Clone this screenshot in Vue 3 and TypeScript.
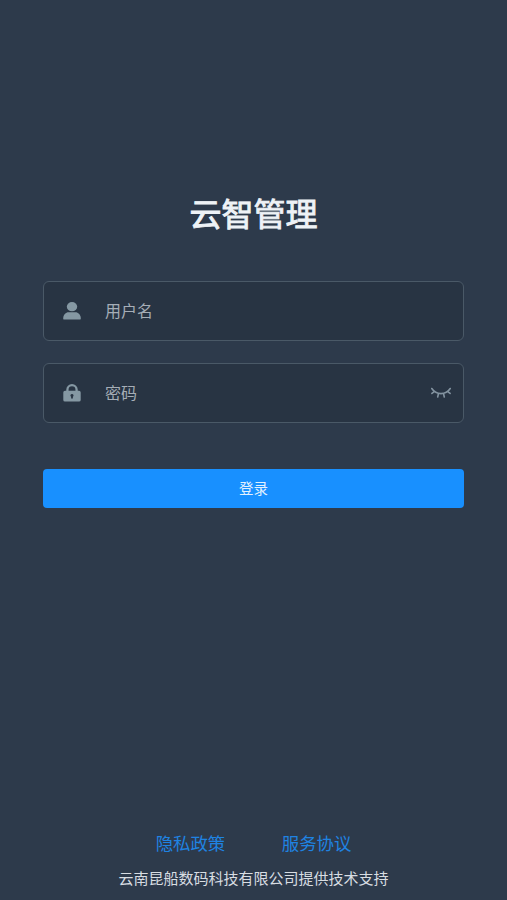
<script setup lang="ts">
import { ref } from 'vue'

const username = ref('')
const password = ref('')
</script>

<template>
  <main class="page">
    <h1 class="title">云智管理</h1>
    <form class="form" @submit.prevent>
      <label class="field">
        <svg class="icon" viewBox="0 0 18 18" fill="currentColor">
          <ellipse cx="9" cy="4.7" rx="5.2" ry="4.6" />
          <path d="M.2 16.4C.2 12.6 2.800 10.200 5.600 10.200h6.800c2.800 0 5.400 2.400 5.400 6.200 0 .8-.5 1.200-1.200 1.200H1.400C.7 17.600.2 17.200.2 16.400Z" />
        </svg>
        <input v-model="username" class="input" type="text" placeholder="用户名" />
      </label>
      <label class="field">
        <svg class="icon" viewBox="0 0 18 18">
          <path d="M4.400 8V5.800a4.600 4.600 0 0 1 9.200 0V8" fill="none" stroke="currentColor" stroke-width="2.300" />
          <path fill="currentColor" fill-rule="evenodd" d="M2 6.800h14a1.700 1.700 0 0 1 1.700 1.700v7.400a1.700 1.700 0 0 1-1.700 1.700H2a1.700 1.700 0 0 1-1.700-1.700V8.500A1.700 1.700 0 0 1 2 6.800ZM9 9.900a1.600 1.600 0 0 0-.9 2.900V14.600h1.800V12.800A1.600 1.600 0 0 0 9 9.900Z" />
        </svg>
        <input v-model="password" class="input" type="password" placeholder="密码" />
        <svg class="eye" viewBox="0 0 20 12" fill="none" stroke="currentColor" stroke-width="1.600" stroke-linecap="round">
          <path d="M.8 1.500C5.200 8.300 14.800 8.300 19.200 1.500M3.600 4.300.9 6.400M7.500 6.500 6.700 10M12.500 6.500l.8 3.500M16.400 4.300l2.700 2.100" />
        </svg>
      </label>
      <button class="submit" type="submit">登录</button>
    </form>
    <footer class="footer">
      <nav class="links">
        <a class="link">隐私政策</a>
        <a class="link">服务协议</a>
      </nav>
      <p class="support">云南昆船数码科技有限公司提供技术支持</p>
    </footer>
  </main>
</template>

<style>
body {
  background: #2d3a4b;
}
</style>

<style scoped>
.page {
  box-sizing: border-box;
  display: flex;
  flex-direction: column;
  height: 100vh;
  padding: 192px 43px 12px;
  background: #2d3a4b;
  font-family: "Noto Sans CJK SC", sans-serif;
}
.title {
  margin: 0;
  color: #eef2f6;
  font-size: 32px;
  font-weight: 400;
  line-height: 40px;
  text-align: center;
  -webkit-text-stroke: 0.9px #eef2f6;
}
.form {
  display: flex;
  flex-direction: column;
  gap: 22px;
  margin-top: 49px;
}
.field {
  box-sizing: border-box;
  display: flex;
  align-items: center;
  height: 60px;
  padding: 0 12px 0 19px;
  border: 1px solid #4a5967;
  border-radius: 6px;
  background: #283443;
}
.icon {
  flex: none;
  width: 18px;
  height: 18px;
  color: #8598a3;
}
.input {
  flex: 1;
  min-width: 0;
  margin-left: 24px;
  padding: 0 0 2px;
  border: 0;
  outline: 0;
  background: transparent;
  color: #fff;
  font: 16px/24px "Noto Sans CJK SC", sans-serif;
}
.input::placeholder {
  color: #a5adb6;
  opacity: 1;
}
.eye {
  flex: none;
  width: 20px;
  height: 12px;
  color: #8393a0;
}
.submit {
  height: 39px;
  margin-top: 24px;
  padding: 0 0 2px;
  border: 0;
  border-radius: 4px;
  background: #1890ff;
  color: #e2f1ff;
  font: 14.5px/37px "Noto Sans CJK SC", sans-serif;
}
.footer {
  margin-top: auto;
  text-align: center;
}
.links {
  display: flex;
  justify-content: center;
  gap: 56.5px;
}
.link {
  color: #1f83e2;
  font-size: 17.4px;
  line-height: 26px;
}
.support {
  margin: 12px 0 0;
  color: #d8dde2;
  font-size: 15px;
  line-height: 20px;
}
</style>
